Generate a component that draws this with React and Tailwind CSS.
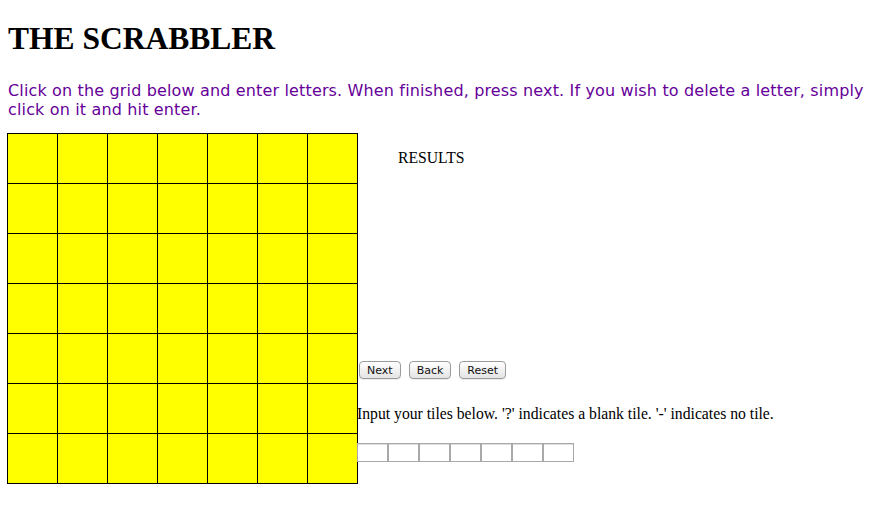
const ROWS = 7;
const COLS = 7;

function Grid() {
  return (
    <div className="grid grid-cols-[repeat(7,50px)] border-l border-t border-black bg-[#ffff00] w-[351px] shrink-0">
      {Array.from({ length: ROWS * COLS }).map((_, i) => (
        <div key={i} className="h-[50px] border-r border-b border-black" />
      ))}
    </div>
  );
}

function MacButton({ children }) {
  return (
    <button className="h-[18px] px-[7px] rounded-[4px] border border-[#9a9a9a] bg-gradient-to-b from-white to-[#e4e4e4] text-[11px] leading-none text-[#111] shadow-[0_1px_0_rgba(0,0,0,0.08)] font-['DejaVu_Sans',sans-serif]">
      {children}
    </button>
  );
}

export default function App() {
  return (
    <div className="px-[7px] pt-[20px] bg-white min-h-[508px] font-['Liberation_Serif',serif] text-black">
      <h1 className="text-[31.5px] font-bold leading-[37px] pl-[1px]">THE SCRABBLER</h1>
      <p className="mt-[24px] pl-[1px] w-[860px] text-[16px] leading-[19px] text-[#660099] font-['DejaVu_Sans',sans-serif] tracking-[0.15px]">
        Click on the grid below and enter letters. When finished, press next. If you wish to delete a letter, simply click on it and hit enter.
      </p>
      <div className="mt-[14px] flex">
        <Grid />
        <div className="flex flex-col flex-1">
          <div className="pl-[40px] pt-[16px] text-[15.7px] leading-[18px]">RESULTS</div>
          <div className="mt-[194px] flex gap-[8px] pl-[1px]">
            <MacButton>Next</MacButton>
            <MacButton>Back</MacButton>
            <MacButton>Reset</MacButton>
          </div>
          <div className="mt-[26px] text-[15.7px] leading-[18px] -ml-[1px]">
            Input your tiles below. '?' indicates a blank tile. '-' indicates no tile.
          </div>
          <div className="mt-[20px] flex -ml-[1px]">
            {Array.from({ length: 7 }).map((_, i) => (
              <input key={i} className="w-[31px] h-[19px] border border-[#a9a9a9] shadow-[inset_0_1px_0_#dddddd] outline-none" />
            ))}
          </div>
        </div>
      </div>
    </div>
  );
}
